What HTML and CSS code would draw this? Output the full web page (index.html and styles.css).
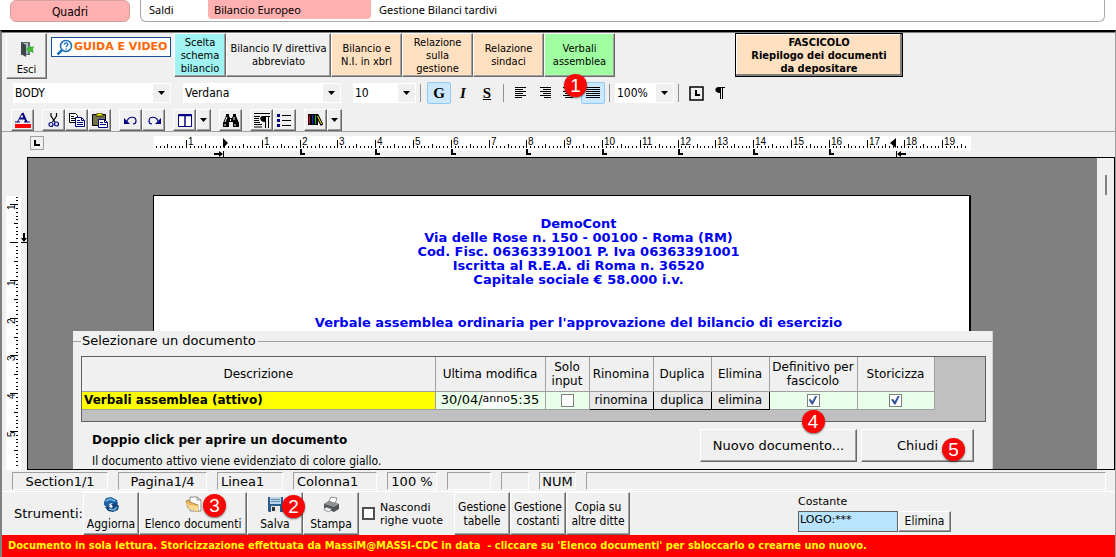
FILE: index.html
```html
<!DOCTYPE html>
<html lang="it">
<head>
<meta charset="utf-8">
<title>Bilancio Europeo - Verbali assemblea</title>
<link rel="stylesheet" href="styles.css">
</head>
<body>
<nav class="top-nav">
  <a class="nav-pill" href="#">Quadri</a>
  <div class="nav-box">
    <a class="nav-link" href="#">Saldi</a>
    <a class="nav-link nav-link-active" href="#">Bilancio Europeo</a>
    <a class="nav-link" href="#">Gestione Bilanci tardivi</a>
  </div>
</nav>

<main class="window">
  <header class="toolbars">
    <div class="main-bar">
      <button class="raised exit-btn" type="button">
        <svg width="16" height="16" viewBox="0 0 16 16"><path d="M2 1h9v13H2z" fill="#626b70"/><path d="M4 2h5v11H4z" fill="#a8bac2"/><path d="M2 1l5 3v12l-5-3z" fill="#3e464b"/><path d="M14.500 12L8 9l2-1V5l3 1 2-1-1 3z" fill="#37a935"/><path d="M7 8l4-3v2h3v3h-3v3z" fill="#45b83b"/></svg>
        <span>Esci</span>
      </button>
      <a class="guide-link" href="#">
        <svg width="17" height="17" viewBox="0 0 17 17" fill="none" stroke="#1b6fb8" stroke-width="1.500"><circle cx="10" cy="7" r="5.500"/><path d="M6 11l-4.500 4.500" stroke-width="2.500"/><path d="M8.300 5.700c0-2.400 3.500-2.300 3.500-.1 0 1.300-1.700 1.200-1.700 2.700M10.100 9.500v1.200" stroke-width="1.300"/></svg>
        <span>GUIDA E VIDEO</span>
      </a>
      <div class="step-group">
        <button class="raised step step-cyan" type="button">Scelta<br>schema<br>bilancio</button>
        <button class="raised step step-wide" type="button">Bilancio IV direttiva<br>abbreviato</button>
        <button class="raised step step-peach" type="button">Bilancio e<br>N.I. in xbrl</button>
        <button class="raised step step-peach" type="button">Relazione<br>sulla<br>gestione</button>
        <button class="raised step step-peach" type="button">Relazione<br>sindaci</button>
        <button class="raised step step-green" type="button">Verbali<br>assemblea<span class="badge badge-one">1</span></button>
      </div>
      <button class="dossier-btn" type="button">FASCICOLO<br>Riepilogo dei documenti<br>da depositare</button>
    </div>

    <div class="format-bar">
      <span class="combo combo-long"><select aria-label="Stile"><option>BODY</option></select></span>
      <span class="combo combo-long"><select aria-label="Carattere"><option>Verdana</option></select></span>
      <span class="combo combo-short"><select aria-label="Dimensione"><option>10</option></select></span>
      <span class="sep"></span>
      <div class="fmt-group">
        <button class="fmt fmt-on fmt-bold" type="button">G</button>
        <button class="fmt fmt-italic" type="button">I</button>
        <button class="fmt fmt-under" type="button">S</button>
      </div>
      <span class="sep"></span>
      <div class="fmt-group">
        <button class="fmt" type="button" aria-label="Allinea a sinistra"><svg width="14" height="12" viewBox="0 0 14 12" stroke="#000"><path d="M1 .5h11M1 2.500h8M1 4.500h11M1 6.500h8M1 8.500h11M1 10.500h7"/></svg></button>
        <button class="fmt" type="button" aria-label="Allinea a destra"><svg width="14" height="12" viewBox="0 0 14 12" stroke="#000"><path d="M2 .5h11M5 2.500h8M2 4.500h11M5 6.500h8M2 8.500h11M6 10.500h7"/></svg></button>
        <button class="fmt" type="button" aria-label="Centra"><svg width="14" height="12" viewBox="0 0 14 12" stroke="#000"><path d="M1 .5h12M3 2.500h8M1 4.500h12M3 6.500h8M1 8.500h12M3 10.500h8"/></svg></button>
        <button class="fmt fmt-on" type="button" aria-label="Giustifica"><svg width="14" height="12" viewBox="0 0 14 12" stroke="#000"><path d="M0 .5h14M0 2.500h14M0 4.500h14M0 6.500h14M0 8.500h14M0 10.500h14"/></svg></button>
      </div>
      <span class="sep"></span>
      <span class="combo combo-zoom"><select aria-label="Zoom"><option>100%</option></select></span>
      <span class="sep"></span>
      <button class="fmt" type="button" aria-label="Tabulazione"><svg width="15" height="15" viewBox="0 0 15 15"><path d="M1 1h13v13H1z" fill="none" stroke="#000" stroke-width="1.500"/><path d="M6 4h2v4h3v2H6z"/></svg></button>
      <button class="fmt" type="button" aria-label="Segni di paragrafo"><svg width="10" height="12" viewBox="0 0 10 12"><path d="M4 0h6v1H8v11H7V1H6v11H5V6C-1 6-1 0 4 0z"/></svg></button>
    </div>

    <div class="icon-bar">
      <button class="raised tool" type="button" aria-label="Colore testo"><svg width="18" height="17" viewBox="0 0 18 17"><path d="M1 16h16v-4H1z" fill="#f00"/><path d="M3.500 10L8 1.500" fill="none" stroke="#000080"/><path d="M8.500 1l4 9M5.500 6.500h6" fill="none" stroke="#000080" stroke-width="2"/><path d="M1 10h5M10 10h6" stroke="#000080"/></svg></button>
      <div class="tool-group">
        <button class="raised tool" type="button" aria-label="Taglia"><svg width="12" height="15" viewBox="0 0 12 15" fill="none"><path d="M3 0v3l4 6M8.500 0v3l-4 6" stroke="#000" stroke-width="1.200"/><circle cx="3" cy="11.500" r="2" stroke="#000080" stroke-width="1.200"/><circle cx="8.500" cy="11" r="2" stroke="#000080" stroke-width="1.200"/></svg></button>
        <button class="raised tool" type="button" aria-label="Copia"><svg width="16" height="14" viewBox="0 0 16 14"><path d="M.5.5h6l2 2v7h-8z" fill="#fff" stroke="#000"/><path d="M2 3.500h3M2 5.500h5M2 7.500h5" stroke="#000"/><path d="M6.500 4.500h6l3 3v6h-9z" fill="#fff" stroke="#000080"/><path d="M12.500 4.500v3h3M8 7.500h3M8 9.500h6M8 11.500h6" stroke="#000080" fill="none"/></svg></button>
        <button class="raised tool" type="button" aria-label="Incolla"><svg width="16" height="15" viewBox="0 0 16 15"><path d="M.5 1.500h13v11H.5z" fill="#74724b" stroke="#000"/><path d="M4 3V1h2V0h3v1h2v2z" fill="#ff0" stroke="#000" stroke-width=".7"/><path d="M6.500 6.500h6l3 3v5h-9z" fill="#fff" stroke="#000080"/><path d="M12.500 6.500v3h3M8 9.500h3M8 11.500h6" stroke="#000080" fill="none"/></svg></button>
      </div>
      <div class="tool-group">
        <button class="raised tool" type="button" aria-label="Annulla"><svg width="14" height="9" viewBox="0 0 14 9" fill="none" stroke="#000080" stroke-width="1.200"><path d="M3 5c2-5 9-5 9 0 0 2-1 3-3 3"/><path d="M0 2v6h6z" fill="#000080" stroke="none"/></svg></button>
        <button class="raised tool" type="button" aria-label="Ripeti"><svg width="14" height="9" viewBox="0 0 14 9" fill="none" stroke="#000080" stroke-width="1.200"><path d="M11 5C9 0 2 0 2 5c0 2 1 3 3 3"/><path d="M14 2v6H8z" fill="#000080" stroke="none"/></svg></button>
      </div>
      <div class="tool-group">
        <button class="raised tool" type="button" aria-label="Tabella"><svg width="14" height="13" viewBox="0 0 14 13"><path d="M.5.5h13v12H.5z" fill="#fff" stroke="#000080"/><path d="M0 1.500h14M7 2v11" stroke="#000080" stroke-width="1.500"/></svg></button>
        <button class="raised tool-arrow" type="button" aria-label="Opzioni tabella"><span class="arrow"></span></button>
      </div>
      <button class="raised tool" type="button" aria-label="Trova"><svg width="16" height="13" viewBox="0 0 16 13"><path d="M3 0h3v2l1 2h2l1-2V0h3v2l3 7v4h-6V8H6v5H0V9l3-7z"/><path d="M4 3L2 8M11 3v3M2 10v2M12 10v2M7.500 5v2" stroke="#fff" fill="none"/></svg></button>
      <div class="tool-group">
        <button class="raised tool" type="button" aria-label="Paragrafo"><svg width="16" height="15" viewBox="0 0 16 15"><path d="M0 .5h16M0 3.500h6M0 5.500h5M0 7.500h5M0 9.500h6M0 11.500h8M0 14h8" stroke="#000"/><path d="M9 3h7v1h-1v11h-1V4h-2v11h-1V9C5 9 5 3 9 3z"/></svg></button>
        <button class="raised tool" type="button" aria-label="Elenco puntato"><svg width="15" height="13" viewBox="0 0 15 13"><path d="M0 0h3v3H0zM0 5h3v3H0zM0 10h3v3H0z" fill="#000080"/><path d="M5 1.500h9M5 6.500h9M5 11.500h9" stroke="#000"/></svg></button>
      </div>
      <div class="tool-group">
        <button class="raised tool" type="button" aria-label="Libreria"><svg width="15" height="12" viewBox="0 0 15 12"><path d="M0 0h10v11H0z"/><path d="M1.500 1v9" stroke="#d00"/><path d="M4.500 1v9" stroke="#22f"/><path d="M7.500 1v9" stroke="#0b0"/><path d="M9 1l5 10" stroke="#000" stroke-width="3"/><path d="M9.500 2l4 8" stroke="#ff0"/></svg></button>
        <button class="raised tool-arrow" type="button" aria-label="Opzioni libreria"><span class="arrow"></span></button>
      </div>
    </div>
  </header>

  <section class="editor">
    <div class="ruler-row">
      <button class="tab-kind" type="button" aria-label="Tipo tabulazione"><svg width="6" height="6" viewBox="0 0 6 6"><path d="M0 0h2v4h4v2H0z"/></svg></button>
      <svg class="ruler-h" id="ruler-h" width="817" height="22" viewBox="0 0 817 22"></svg>
    </div>
    <div class="editor-body">
      <div class="ruler-side">
        <svg id="ruler-v" width="21" height="274" viewBox="0 0 21 274"></svg>
      </div>
      <div class="canvas">
        <article class="page">
          <p>DemoCont<br>Via delle Rose n. 150 - 00100 - Roma (RM)<br>Cod. Fisc. 06363391001 P. Iva 06363391001<br>Iscritta al R.E.A. di Roma n. 36520<br>Capitale sociale € 58.000 i.v.</p>
          <h1>Verbale assemblea ordinaria per l'approvazione del bilancio di esercizio</h1>
        </article>
        <div class="scroll-track"><div class="scroll-thumb"></div></div>

        <fieldset class="picker">
          <legend>Selezionare un documento</legend>
          <div class="grid-wrap">
            <table class="doc-grid">
              <colgroup><col class="c-desc"><col class="c-date"><col class="c-input"><col class="c-ren"><col class="c-dup"><col class="c-del"><col class="c-def"><col class="c-sto"></colgroup>
              <thead>
                <tr><th>Descrizione</th><th>Ultima modifica</th><th>Solo input</th><th>Rinomina</th><th>Duplica</th><th>Elimina</th><th>Definitivo per<br>fascicolo</th><th>Storicizza</th></tr>
              </thead>
              <tbody>
                <tr>
                  <td class="active-doc">Verbali assemblea (attivo)</td>
                  <td><div class="date-cell">30/04/<span class="year">anno</span>5:35</div></td>
                  <td><input class="tick" type="checkbox" aria-label="Solo input"></td>
                  <td class="act"><button type="button">rinomina</button></td>
                  <td class="act"><button type="button">duplica</button></td>
                  <td class="act"><button type="button">elimina</button></td>
                  <td><div class="tick-cell"><input class="tick" type="checkbox" aria-label="Definitivo per fascicolo" checked><span class="badge badge-four">4</span></div></td>
                  <td><input class="tick" type="checkbox" aria-label="Storicizza" checked></td>
                </tr>
              </tbody>
            </table>
          </div>
          <div class="picker-foot">
            <div class="picker-help">
              <strong>Doppio click per aprire un documento</strong>
              <span>Il documento attivo viene evidenziato di colore giallo.</span>
            </div>
            <button class="raised picker-btn new-btn" type="button">Nuovo documento...</button>
            <button class="raised picker-btn close-btn" type="button">Chiudi<span class="badge badge-five">5</span></button>
          </div>
          <div class="picker-line"></div>
        </fieldset>
      </div>
    </div>
  </section>

  <div class="status-bar">
    <span class="cell cell-section">Section1/1</span>
    <span class="cell cell-page">Pagina1/4</span>
    <span class="cell cell-row">Linea1</span>
    <span class="cell cell-col">Colonna1</span>
    <span class="cell cell-zoom">100 %</span>
    <span class="cell cell-a"></span>
    <span class="cell cell-b"></span>
    <span class="cell cell-num">NUM</span>
    <span class="cell cell-rest"></span>
  </div>

  <div class="tools-bar">
    <span class="tools-label">Strumenti:</span>
    <div class="step-group">
      <button class="raised big-btn w-small" type="button"><svg width="17" height="17" viewBox="0 0 17 17"><path d="M1 6l2-4 5-1 6 3 1 4-4 1-2-2-3 1 1 2-3 1-3-2z" fill="#1d64a4"/><path d="M16 10l-1 4-5 2-5-1-3-4 3-1 3 2 2-1-2-3 5-1z" fill="#12457a"/><path d="M3 5l4-2 5 2M14 11l-3 3-5-1" stroke="#79bbe6" stroke-width="1.500" fill="none"/></svg><span>Aggiorna</span></button>
      <button class="raised big-btn w-list" type="button"><svg width="17" height="17" viewBox="0 0 17 17"><path d="M5 1h7l4 3v11H5z" fill="#fff" stroke="#777" stroke-width=".8"/><path d="M12 1v3h4" fill="none" stroke="#777" stroke-width=".8"/><path d="M1 5l3-1 1 2 8 3v7L3 12z" fill="#e9b65d" stroke="#9b6d28" stroke-width=".7"/><path d="M1 6l3 3 9 1v6l-9-3z" fill="#f9d894"/></svg><span>Elenco documenti</span><span class="badge badge-three">3</span></button>
      <button class="raised big-btn w-small" type="button"><svg width="17" height="17" viewBox="0 0 17 17"><path d="M1 1h15v15H2l-1-1z" fill="#285d8d"/><path d="M3 1h11v7H3z" fill="#b9d5ec"/><path d="M4 3.500h9M4 5.500h9" stroke="#6d8da8"/><path d="M4 10h9v6H4z" fill="#e8e8e8"/><path d="M5 11h3v4H5z" fill="#333"/></svg><span>Salva</span><span class="badge badge-two">2</span></button>
      <button class="raised big-btn w-small" type="button"><svg width="17" height="17" viewBox="0 0 17 17"><path d="M5 7l3-6 6 1-2 6z" fill="#fff" stroke="#777" stroke-width=".8"/><path d="M1 8l5-3 10 3v5l-5 3-10-4z" fill="#505456"/><path d="M1 8l5-3 10 3-5 3z" fill="#909496"/><path d="M3 11l6 2-3 3-5-2z" fill="#ececec" stroke="#666" stroke-width=".6"/></svg><span>Stampa</span></button>
    </div>
    <label class="hide-rows"><input type="checkbox"><span>Nascondi<br>righe vuote</span></label>
    <div class="step-group manage">
      <button class="raised big-btn w-small" type="button">Gestione<br>tabelle</button>
      <button class="raised big-btn w-small" type="button">Gestione<br>costanti</button>
      <button class="raised big-btn w-copy" type="button">Copia su<br>altre ditte</button>
    </div>
    <div class="constant">
      <label for="costante">Costante</label>
      <div class="constant-row">
        <input id="costante" type="text" value="LOGO:***">
        <button class="raised" type="button">Elimina</button>
      </div>
    </div>
  </div>
  <footer class="notice">Documento in sola lettura. Storicizzazione effettuata da MassiM@MASSI-CDC in data&nbsp; - cliccare su 'Elenco documenti' per sbloccarlo o crearne uno nuovo.</footer>
</main>
<script src="rulers.js"></script>
</body>
</html>
```
FILE: styles.css
```css
* {
  box-sizing: border-box;
}

body {
  margin: 0;
  min-height: 100vh;
  display: flex;
  flex-direction: column;
  background: #fff;
  color: #000;
  font: 12px/13px "DejaVu Sans Condensed", "DejaVu Sans", sans-serif;
}

button,
input,
select {
  margin: 0;
  color: inherit;
  font: inherit;
}

button {
  padding: 0;
  border: 0;
  background: none;
}

svg {
  display: block;
}

.raised {
  border: 1px solid;
  border-color: #fff #696969 #696969 #fff;
  box-shadow: inset -1px -1px #a0a0a0;
  background: #f0f0f0;
}

.badge {
  position: absolute;
  z-index: 3;
  width: 23px;
  height: 23px;
  border-radius: 50%;
  background: #f90606;
  box-shadow: 0 1px 2px #0008;
  color: #fff;
  font: 19px/23px "Liberation Sans", Arial, sans-serif;
  text-align: center;
}

/* Top navigation */
.top-nav {
  display: flex;
  height: 30px;
  padding: 0 11px 8px 10px;
  gap: 10px;
}

.nav-pill {
  width: 120px;
  border: 1px solid #d9a0a0;
  border-radius: 6px;
  background: #ffb0b0;
  color: #000;
  line-height: 22px;
  text-align: center;
  text-decoration: none;
}

.nav-box {
  flex: 1;
  display: flex;
  padding-bottom: 2px;
  border: 1px solid #a8a8a8;
  border-top: 0;
  border-radius: 0 0 6px 6px;
}

.nav-link {
  padding: 0 8px;
  color: #000;
  font: 11px/20px "Noto Sans", sans-serif;
  text-decoration: none;
}

.nav-link:first-child {
  width: 67px;
}

.nav-link-active {
  width: 163px;
  padding: 0 6px;
  background: #ffb0b0;
  border-radius: 0 0 4px 4px;
}

/* Window */
.window {
  flex: 1;
  display: flex;
  flex-direction: column;
  border-top: 2px solid #000;
  border-left: 2px solid #808080;
  border-right: 1px solid #a0a0a0;
  background: #f0f0f0;
}

.toolbars {
  border-top: 1px solid #808080;
  border-bottom: 1px solid #a0a0a0;
}

.main-bar {
  display: flex;
  align-items: flex-start;
  padding-left: 4px;
  font-size: 11px;
}

.exit-btn {
  width: 41px;
  height: 46px;
  display: flex;
  flex-direction: column;
  align-items: center;
  justify-content: space-between;
  padding: 7px 0 2px;
}

.guide-link {
  display: flex;
  align-items: center;
  gap: 1px;
  width: 120px;
  height: 20px;
  margin: 4px 3px 0 4px;
  padding-left: 4px;
  border: 1px solid #1b4f94;
  background: #fff;
  color: #ff6600;
  font: bold 11px/18px "DejaVu Sans", sans-serif;
  text-decoration: none;
  white-space: nowrap;
}

.step-group {
  display: flex;
}

.step {
  position: relative;
  width: 71px;
  height: 44px;
  white-space: nowrap;
}

.step-cyan {
  width: 52px;
  background: #9ff3f3;
}

.step-wide {
  width: 105px;
}

.step-peach {
  background: #ffe0c0;
}

.step-green {
  background: #a0ffa0;
}

.badge-one {
  left: 19px;
  top: 40px;
}

.dossier-btn {
  width: 168px;
  height: 44px;
  margin-left: 120px;
  border: 1px solid #000;
  box-shadow: inset -2px -2px #808080, inset 1px 1px #fff;
  background: #ffe0c0;
  font-weight: bold;
  overflow: hidden;
}

.format-bar {
  display: flex;
  align-items: center;
  height: 22px;
  margin-top: 3px;
  padding-left: 11px;
}

.combo {
  position: relative;
  height: 20px;
  background: #fff;
}

.combo select {
  width: 100%;
  height: 20px;
  padding: 0 1px;
  border: 1px solid #fff;
  border-radius: 0;
  background: linear-gradient(#f0f0f0, #f0f0f0) right / 17px 18px no-repeat #fff;
  appearance: none;
}

.combo::after,
.arrow {
  width: 7px;
  height: 4px;
  background: #000;
  clip-path: polygon(0 0, 100% 0, 50% 100%);
}

.combo::after {
  content: "";
  position: absolute;
  right: 6px;
  top: 8px;
}

.combo-long {
  width: 158px;
  margin-right: 12px;
}

.combo-short {
  width: 63px;
}

.combo-zoom {
  width: 59px;
}

.sep {
  width: 1px;
  height: 18px;
  margin: 0 5px 0 4px;
  background: #909090;
}

.combo-short + .sep {
  margin-right: 6px;
}

.fmt-group {
  display: flex;
}

.fmt {
  display: grid;
  place-items: center;
  width: 24px;
  height: 22px;
  border-radius: 2px;
  font: bold 15px/20px "Liberation Serif", serif;
}

.fmt-on {
  border: 1px solid #90c8f6;
  background: #cce8ff;
}

.fmt-italic {
  font-style: italic;
}

.fmt-under {
  text-decoration: underline;
}

.icon-bar {
  display: flex;
  gap: 8px;
  margin-top: 5px;
  padding-left: 9px;
}

.tool-group {
  display: flex;
}

.tool {
  display: grid;
  place-items: center;
  width: 23px;
  height: 22px;
}

.tool-arrow {
  display: grid;
  place-items: center;
  width: 15px;
  height: 22px;
}

/* Editor */
.editor {
  flex: 1;
  display: flex;
  flex-direction: column;
}

.ruler-row {
  display: flex;
  align-items: flex-start;
  height: 25px;
  padding: 4px 0 0 28px;
}

.tab-kind {
  display: grid;
  place-items: center;
  width: 14px;
  height: 14px;
  border: 1px solid #a0a0a0;
}

.ruler-h {
  margin-left: 110px;
}

.editor-body {
  flex: 1;
  display: flex;
}

.ruler-side {
  width: 25px;
  padding: 39px 0 0 4px;
}

.canvas {
  position: relative;
  flex: 1;
  display: flex;
  justify-content: space-between;
  min-height: 313px;
  padding-left: 125px;
  border: 1px solid #000;
  background: #808080;
  overflow: hidden;
}

.page {
  width: 818px;
  margin-top: 37px;
  padding: 21px 35px 0 69px;
  border: 1px solid #000;
  border-right-width: 2px;
  background: #fff;
  color: #0000f0;
  font: bold 13px/14px "DejaVu Sans", sans-serif;
  text-align: center;
}

.page p {
  margin: 0 0 29px;
}

.page h1 {
  margin: 0;
  font: inherit;
}

.scroll-track {
  width: 17px;
  padding: 17px 0 0 8px;
  background: #f0f0f0;
}

.scroll-thumb {
  width: 2px;
  height: 20px;
  background: #808080;
}

/* Document picker over the page */
.picker {
  position: absolute;
  left: 45px;
  top: 173px;
  width: 920px;
  margin: 0;
  padding: 0 7px 0 8px;
  border: 0;
  background: linear-gradient(#a0a0a0, #a0a0a0) 0 10px / 100% 1px no-repeat, #f0f0f0;
  box-shadow: inset -1px 0 #d0d0d0;
  font: 13px/14px "DejaVu Sans", sans-serif;
}

.picker legend {
  float: left;
  padding: 0 2px 0 1px;
  background: #f0f0f0;
  line-height: 20px;
}

.grid-wrap {
  clear: both;
  height: 66px;
  border: 1px solid #606060;
  background: #c0c0c0;
}

.picker legend + .grid-wrap {
  margin-top: 25px;
}

.doc-grid {
  width: 852px;
  border-collapse: collapse;
  table-layout: fixed;
}

.doc-grid th,
.doc-grid td {
  padding: 0;
  border: 1px solid #a0a0a0;
  border-top: 0;
  border-left: 0;
  text-align: center;
}

.doc-grid th {
  height: 34px;
  background: #f0f0f0;
  font-size: 12px;
  font-weight: normal;
}

.doc-grid td {
  height: 18px;
  background: #eaffea;
  line-height: 16px;
}

.c-desc { width: 353px; }
.c-date { width: 110px; }
.c-input { width: 44px; }
.c-ren { width: 64px; }
.c-dup { width: 58px; }
.c-del { width: 58px; }
.c-def { width: 88px; }
.c-sto { width: 77px; }

.doc-grid .active-doc {
  padding-left: 2px;
  background: #ff0;
  font-size: 12px;
  font-weight: bold;
  text-align: left;
}

.date-cell {
  display: flex;
  justify-content: center;
  white-space: nowrap;
}

.year {
  background: #fff;
  font-size: 11px;
  line-height: 14px;
}

.doc-grid .act {
  border-color: #000;
  background: #e8e8e8;
  font-size: 12px;
}

.act button {
  display: block;
  width: 100%;
}

.tick {
  appearance: none;
  display: block;
  width: 13px;
  height: 13px;
  margin: 0 auto;
  border: 1px solid #808080;
  background: #fff;
}

.tick:checked::before {
  content: "";
  display: block;
  width: 9px;
  height: 9px;
  margin: 1px;
  background: #35549c;
  clip-path: polygon(0 45%, 22% 38%, 42% 65%, 78% 0, 100% 0, 50% 100%, 35% 100%);
}

.tick-cell {
  position: relative;
}

.badge-four {
  left: 32px;
  top: 16px;
}

.picker-foot {
  display: flex;
  gap: 4px;
  padding: 7px 12px 0 11px;
}

.picker-help {
  flex: 1;
  padding-top: 4px;
}

.picker-help strong,
.picker-help span {
  display: block;
}

.picker-help strong {
  font-size: 12px;
}

.picker-help span {
  padding-top: 8px;
  font: 12px/13px "DejaVu Sans Condensed", "DejaVu Sans", sans-serif;
}

.picker-btn {
  position: relative;
  height: 33px;
}

.new-btn {
  width: 157px;
}

.close-btn {
  width: 113px;
}

.badge-five {
  left: 80px;
  top: 8px;
}

.picker-line {
  height: 12px;
  margin-top: 5px;
  background: #b0b0b0;
}

/* Status bar */
.status-bar {
  display: flex;
  gap: 10px;
  height: 22px;
  padding: 2px 9px 1px 10px;
  border-bottom: 1px solid #fff;
  font: 13px/18px "DejaVu Sans", sans-serif;
}

.cell {
  border: 1px solid;
  border-color: #a0a0a0 #fff #fff #a0a0a0;
  text-align: center;
  white-space: nowrap;
}

.cell-section { width: 96px; }
.cell-page { width: 89px; }
.cell-row { width: 66px; padding-left: 3px; text-align: left; }
.cell-col { width: 84px; padding-left: 3px; text-align: left; }
.cell-zoom { width: 50px; }
.cell-a { width: 44px; }
.cell-b { width: 28px; }
.cell-num { width: 37px; }
.cell-rest { flex: 1; }

/* Bottom tools */
.tools-bar {
  display: flex;
  align-items: center;
  height: 43px;
  padding-left: 12px;
}

.tools-label {
  width: 69px;
  font: 13px/15px "DejaVu Sans", sans-serif;
}

.big-btn {
  position: relative;
  display: flex;
  flex-direction: column;
  align-items: center;
  justify-content: center;
  gap: 4px;
  height: 43px;
  line-height: 14px;
  white-space: nowrap;
}

.manage .big-btn {
  display: block;
}

.w-small { width: 56px; }
.w-list { width: 108px; }
.w-copy { width: 64px; }

.badge-two {
  left: 34px;
  top: 2px;
}

.badge-three {
  left: 63px;
  top: 1px;
}

.hide-rows {
  display: flex;
  align-items: center;
  gap: 5px;
  width: 95px;
  padding-left: 3px;
  font: 11px/13px "DejaVu Sans", sans-serif;
  white-space: nowrap;
}

.hide-rows input {
  appearance: none;
  width: 13px;
  height: 13px;
  border: 2px solid #505050;
  background: #fff;
}

.constant {
  margin-left: 168px;
  font: 11px/12px "DejaVu Sans", sans-serif;
}

.constant label {
  display: block;
  padding-bottom: 3px;
}

.constant-row {
  display: flex;
}

.constant input {
  width: 100px;
  height: 21px;
  padding: 0 1px 4px;
  border: 1px solid #606060;
  background: #b9e4ff;
}

.constant button {
  width: 53px;
  font: 12px/13px "DejaVu Sans Condensed", "DejaVu Sans", sans-serif;
}

.notice {
  min-height: 22px;
  padding-left: 6px;
  background: #f00;
  color: #ff0;
  font: bold 11px/22px "DejaVu Sans Condensed", "DejaVu Sans", sans-serif;
  white-space: nowrap;
  overflow: hidden;
}
```
FILE: rulers.js
```js
const CM = 37.8;
const LABEL_FONT = 'font-family="Liberation Sans, Arial, sans-serif" font-size="10"';

function horizontalRuler(svg) {
  const zero = 70;
  let out = '<rect width="817" height="15" fill="#fff"/>';
  for (let i = -18; i <= 196; i++) {
    const x = Math.round(zero + i * CM / 10);
    const top = i % 10 === 0 ? 4 : i % 5 === 0 ? 8 : 10;
    out += `<rect x="${x}" y="${top}" width="1" height="${12 - top}"/>`;
    if (i % 10 === 0 && i !== 0) {
      out += `<text x="${x + 2}" y="9" ${LABEL_FONT}>${Math.abs(i / 10)}</text>`;
    }
  }
  for (let c = 2; c <= 16; c += 2) {
    const x = Math.round(zero + c * CM);
    out += `<path d="M${x} 13h2v4h3v2h-5z"/>`;
  }
  out += '<path d="M69 2l5 5-5 5zM60 17h5v-2l4 3-4 3v-2h-5zM69 15h1v6h-1z"/>';
  out += '<path d="M742 2l-6 5 6 5zM752 17h-5v-2l-4 3 4 3v-2h5zM742 15h1v6h-1z"/>';
  svg.innerHTML = out;
}

function verticalRuler(svg) {
  const zero = 46;
  let out = '<rect width="15" height="274" fill="#fff"/>';
  for (let i = -12; i <= 59; i++) {
    const y = Math.round(zero + i * CM / 10);
    const left = i % 10 === 0 ? 4 : i % 5 === 0 ? 8 : 10;
    out += `<rect x="${left}" y="${y}" width="${12 - left}" height="1"/>`;
    if (i % 10 === 0 && i !== 0) {
      out += `<text transform="translate(9 ${y + 6}) rotate(-90)" ${LABEL_FONT}>${Math.abs(i / 10)}</text>`;
    }
  }
  out += '<path d="M17 37h2v5h2l-3 4-3-4h2zM15 46h6v1h-6z"/>';
  svg.innerHTML = out;
}

horizontalRuler(document.getElementById('ruler-h'));
verticalRuler(document.getElementById('ruler-v'));
```
